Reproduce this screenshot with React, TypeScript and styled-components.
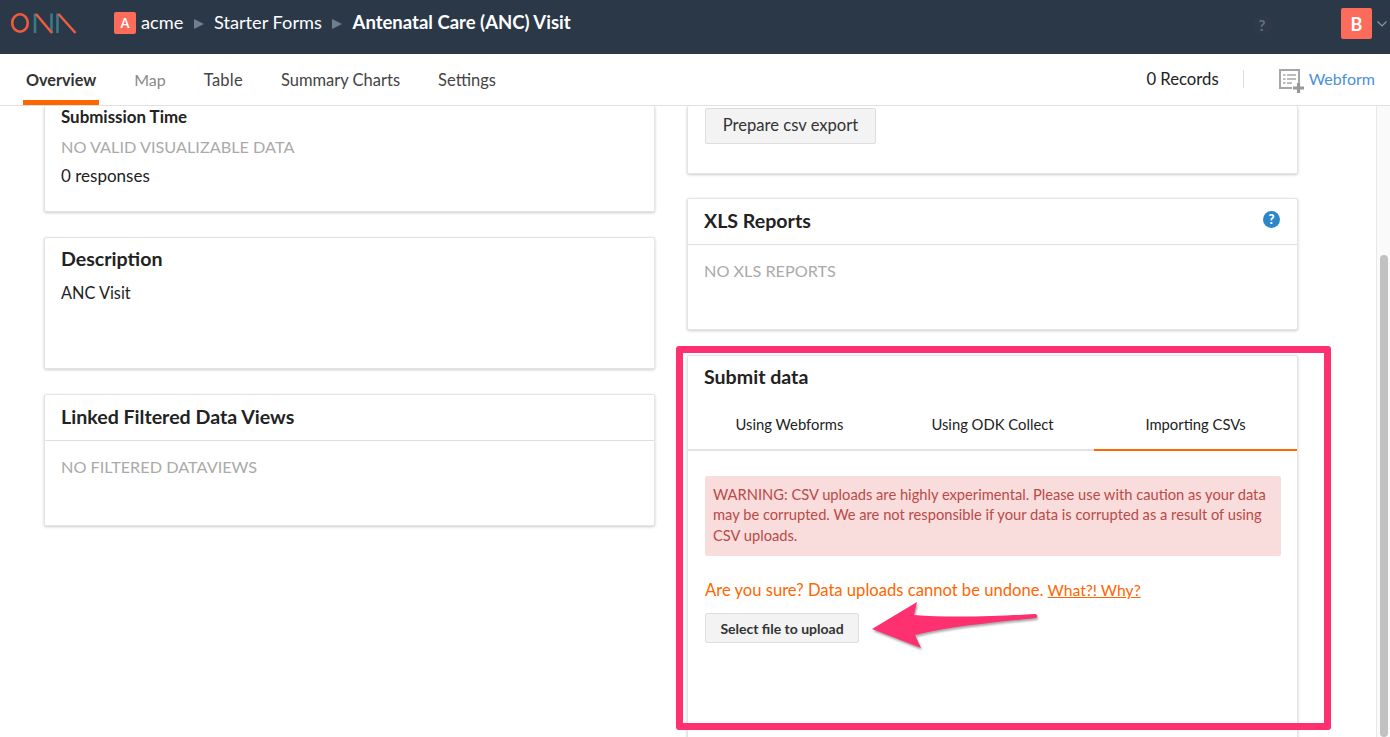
import React from 'react';
import styled, { createGlobalStyle } from 'styled-components';

const Global = createGlobalStyle`
  html, body { margin: 0; padding: 0; height: 100%; overflow: hidden; background: #fff; }
  body { font-family: Lato, "Liberation Sans", sans-serif; color: #222; }
  * { box-sizing: border-box; }
`;
const Page = styled.div`position: relative; width: 1390px; height: 737px; overflow: hidden; background: #fff;`;
const Header = styled.header`height: 54px; background: #2a3848; display: flex; align-items: flex-start;`;
const Logo = styled.svg`margin: 13px 0 0 11px; flex: none;`;
const Crumbs = styled.div`display: flex; align-items: center; margin: 12px 0 0 37px; height: 22px; color: #fff; font-size: 18.2px; flex: 1;`;
const Avatar = styled.span<{ $size: number; $font: number }>`
  width: ${p => p.$size}px; height: ${p => p.$size}px; background: #fd6b5b; color: #fff; border-radius: 2px; flex: none;
  display: inline-flex; align-items: center; justify-content: center; font-size: ${p => p.$font}px; font-weight: 700;
`;
const OrgAvatar = styled(Avatar)`margin-right: 5px;`;
const Crumb = styled.span<{ $bold?: boolean }>`font-weight: ${p => (p.$bold ? 700 : 400)}; font-size: ${p => (p.$bold ? 18.5 : 18.2)}px; padding-bottom: 2px;`;
const Sep = styled.span`width: 0; height: 0; border-left: 10px solid #6f7f90; border-top: 5.5px solid transparent; border-bottom: 5.5px solid transparent; margin: 1px 10.2px 0 10.5px;`;
const Help = styled.span`
  width: 20px; height: 20px; border-radius: 50%; margin: 15px 69px 0 0; background: #2e3a49; color: #66717d;
  font-size: 15px; line-height: 20px; text-align: center; font-weight: 700;
`;
const UserWrap = styled.div`display: flex; align-items: center; margin: 8px 0 0 0; gap: 5px; padding-right: 3px;`;
const Nav = styled.nav`height: 52px; border-bottom: 1px solid #e0e0e0; display: flex; align-items: stretch; padding-left: 23px; font-size: 16.5px;`;
const Tab = styled.a<{ $active?: boolean; $muted?: boolean; $spaced?: boolean }>`
  padding: 16px 3px 0; margin-right: 32px; height: 51px;
  color: ${p => (p.$active ? '#333' : p.$muted ? '#8a8a8a' : '#444')};
  font-weight: ${p => (p.$active ? 700 : 400)};
  font-size: ${p => (p.$active ? 16.2 : p.$muted ? 16 : 16.5)}px;
  letter-spacing: ${p => (p.$spaced ? 0.25 : 0)}px;
  border-bottom: ${p => (p.$active ? '5px solid #f60' : '0')};
`;
const NavRight = styled.div`margin-left: auto; display: flex; align-items: center; padding: 0 15px 2px 0;`;
const Records = styled.span`color: #222; font-size: 16.7px; padding-right: 24px; border-right: 1px solid #ddd; line-height: 18px; margin-right: 35px;`;
const Webform = styled.a`color: #4a90d9; font-size: 16px; display: flex; align-items: center; gap: 4px;`;
const FormIcon = styled.svg`flex: none; margin-top: 4px;`;
const Body = styled.main`height: 631px; display: flex; overflow: hidden; position: relative;`;
const Columns = styled.div`flex: 1; display: flex; gap: 32px; padding: 0 0 0 44px; align-items: flex-start;`;
const Column = styled.div`width: 611px; display: flex; flex-direction: column; gap: 25px;`;
const ScrollTrack = styled.div`width: 14px; background: #fafafa; border-left: 1px solid #e8e8e8; padding: 149px 2px 0 3px;`;
const ScrollThumb = styled.div`width: 8px; height: 100%; background: #c1c1c1; border-radius: 4px;`;
const Card = styled.section<{ $height: number; $clipped?: boolean; $pull?: boolean }>`
  height: ${p => p.$height}px; background: #fff; border: 1px solid #e4e4e4; border-radius: 2px;
  border-top-width: ${p => (p.$clipped ? 0 : 1)}px;
  margin-top: ${p => (p.$pull ? -1 : 0)}px;
  box-shadow: 0 1px 3px rgba(0, 0, 0, .2);
`;
const CardTitle = styled.h2`
  position: relative; margin: 0; padding: 0 16px; height: 46px; line-height: 44px; font-size: 19.6px; font-weight: 700; color: #222;
  border-bottom: 1px solid #e0e0e0;
`;
const PlainTitle = styled.h2`margin: 0; padding: 9px 16px 0; font-size: 19.6px; line-height: 24px; font-weight: 700; color: #222;`;
const Sub = styled.h3`margin: 0; padding: 1px 16px 0; font-size: 16.9px; line-height: 20px; font-weight: 700; color: #222;`;
const Muted = styled.p<{ $top: number }>`margin: ${p => p.$top}px 16px 0; font-size: 16.25px; line-height: 20px; color: #aaa; font-weight: 400;`;
const Text = styled.p<{ $top: number; $size?: number }>`margin: ${p => p.$top}px 16px 0; font-size: ${p => p.$size ?? 16.3}px; line-height: 20px; color: #222;`;
const HelpDot = styled.span`
  position: absolute; right: 17px; top: 12px; width: 17px; height: 17px; border-radius: 50%;
  background: #2b87c8; color: #fff; font-size: 13px; font-weight: 900; line-height: 17px; text-align: center;
`;
const Btn = styled.button`
  display: block; background: #f3f3f3; border: 1px solid #ddd; border-radius: 2px; font-family: inherit; color: #333; padding: 0;
`;
const ExportBtn = styled(Btn)`margin: 2px 0 0 17px; width: 171px; height: 36px; font-size: 16.6px; padding-bottom: 2px;`;
const UploadBtn = styled(Btn)`margin: 12px 0 0 17px; width: 154px; height: 30px; font-size: 14px; font-weight: 700;`;
const Tabs = styled.div`display: grid; grid-template-columns: repeat(3, 1fr); margin-top: 15px; height: 47px; border-bottom: 2px solid #e2e2e2;`;
const SubTab = styled.div<{ $active?: boolean }>`
  text-align: center; font-size: 14.8px; line-height: 20px; padding-top: 10px; height: 47px; color: #222;
  border-bottom: ${p => (p.$active ? '2px solid #f60' : '0')};
`;
const Alert = styled.div`margin: 25px 16px 0 17px; height: 80px; padding: 7.5px 8px; background: #f9dcdc; border-radius: 2px; color: #b94a48; font-size: 14.7px; line-height: 20.5px;`;
const Warn = styled.p`margin: 23px 16px 0 17px; font-size: 16.6px; line-height: 22px; color: #f60;`;
const WarnLink = styled.a`color: #f60; text-decoration: underline; font-size: 15.7px;`;
const Annotation = styled.div`position: absolute; left: 676px; top: 346px; width: 655px; height: 384px; border: 7px solid #ff3070; border-radius: 3px; pointer-events: none;`;
const Arrow = styled.svg`position: absolute; left: 860px; top: 590px; pointer-events: none; filter: drop-shadow(1px 2px 1px rgba(0,0,0,.35));`;

export default function App() {
  return (
    <Page>
      <Global />
      <Header>
        <Logo width="66" height="21" viewBox="0 0 66 21" fill="none" strokeWidth="2.6">
          <ellipse cx="9" cy="10" rx="7.8" ry="8.7" stroke="#f15a3c" />
          <path d="M24 .5V20M40.500.5V20M46.500.5V20" stroke="#3a7a88" />
          <path d="M25 1l16 19M47.500 1l17 19" stroke="#ee5a42" />
        </Logo>
        <Crumbs>
          <OrgAvatar $size={22} $font={13}>A</OrgAvatar>
          <Crumb>acme</Crumb>
          <Sep />
          <Crumb>Starter Forms</Crumb>
          <Sep />
          <Crumb $bold>Antenatal Care (ANC) Visit</Crumb>
        </Crumbs>
        <Help>?</Help>
        <UserWrap>
          <Avatar $size={31} $font={18}>B</Avatar>
          <svg width="10" height="6" viewBox="0 0 10 6" fill="none" stroke="#8a97a5" strokeWidth="1.2"><path d="M.5.5 5 5 9.500.5" /></svg>
        </UserWrap>
      </Header>
      <Nav>
        <Tab $active>Overview</Tab>
        <Tab $muted>Map</Tab>
        <Tab $spaced>Table</Tab>
        <Tab>Summary Charts</Tab>
        <Tab>Settings</Tab>
        <NavRight>
          <Records>0 Records</Records>
          <Webform>
            <FormIcon width="26" height="24" viewBox="0 0 26 24" fill="none" stroke="#a6a6a6" strokeWidth="2">
              <path d="M20 14V1H1v18h12" />
              <path d="M4 6h2.500M8 6h9M4 10h2.500M8 10h9M4 14h2.500M8 14h5" strokeWidth="1.500" />
              <path d="M19.500 14v10M14 19h11" strokeWidth="3.200" stroke="#999" />
            </FormIcon>
            Webform
          </Webform>
        </NavRight>
      </Nav>
      <Body>
        <Columns>
          <Column>
            <Card $height={106} $clipped>
              <Sub>Submission Time</Sub>
              <Muted $top={10}>NO VALID VISUALIZABLE DATA</Muted>
              <Text $top={9} $size={17}>0 responses</Text>
            </Card>
            <Card $height={132}>
              <PlainTitle>Description</PlainTitle>
              <Text $top={12}>ANC Visit</Text>
            </Card>
            <Card $height={132}>
              <CardTitle>Linked Filtered Data Views</CardTitle>
              <Muted $top={16}>NO FILTERED DATAVIEWS</Muted>
            </Card>
          </Column>
          <Column>
            <Card $height={68} $clipped>
              <ExportBtn>Prepare csv export</ExportBtn>
            </Card>
            <Card $height={132} $pull>
              <CardTitle>XLS Reports<HelpDot>?</HelpDot></CardTitle>
              <Muted $top={16}>NO XLS REPORTS</Muted>
            </Card>
            <Card $height={400}>
              <PlainTitle>Submit data</PlainTitle>
              <Tabs>
                <SubTab>Using Webforms</SubTab>
                <SubTab>Using ODK Collect</SubTab>
                <SubTab $active>Importing CSVs</SubTab>
              </Tabs>
              <Alert>WARNING: CSV uploads are highly experimental. Please use with caution as your data may be corrupted. We are not responsible if your data is corrupted as a result of using CSV uploads.</Alert>
              <Warn>Are you sure? Data uploads cannot be undone. <WarnLink>What?! Why?</WarnLink></Warn>
              <UploadBtn>Select file to upload</UploadBtn>
            </Card>
          </Column>
        </Columns>
        <ScrollTrack><ScrollThumb /></ScrollTrack>
      </Body>
      <Annotation />
      <Arrow width="190" height="70" viewBox="860 590 190 70">
        <path d="M872 629 917 602 914 615C950 618 1000 616 1035 614 1038 614 1038 618 1035 618 1000 622 950 626 915 635L921 648Z" fill="#ff3070" />
      </Arrow>
    </Page>
  );
}
